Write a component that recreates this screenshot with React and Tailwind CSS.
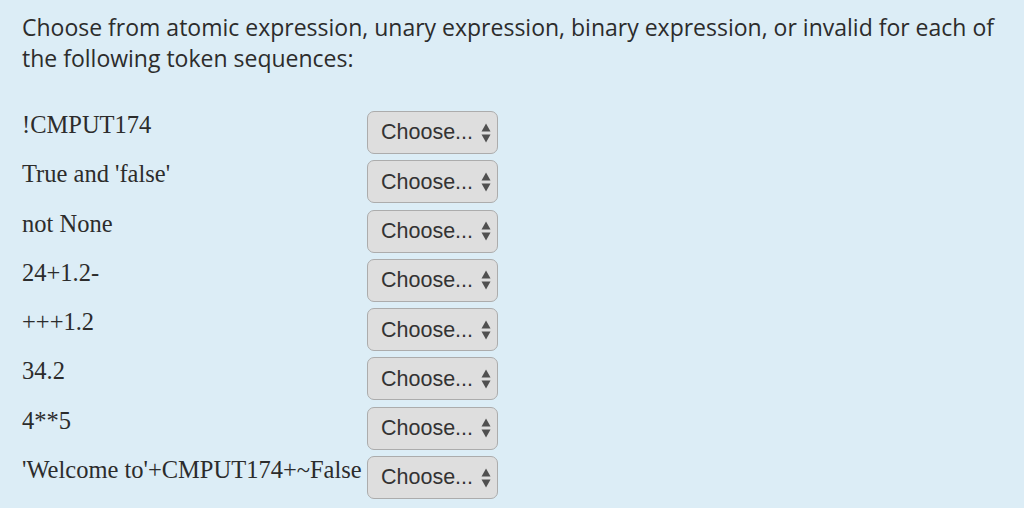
import React from "react";

const rows = [
  "!CMPUT174",
  "True and 'false'",
  "not None",
  "24+1.2-",
  "+++1.2",
  "34.2",
  "4**5",
  "'Welcome to'+CMPUT174+~False",
];

function Arrows() {
  return (
    <svg width="10" height="20" viewBox="0 0 10 20" className="ml-[8px]">
      <path d="M5 0.5 L9.5 8.5 L0.5 8.5 Z" fill="#505050" />
      <path d="M5 19.5 L9.5 11.5 L0.5 11.5 Z" fill="#505050" />
    </svg>
  );
}

export default function App() {
  return (
    <div className="w-[1024px] h-[508px] bg-[#dcedf6] overflow-hidden">
      <div className="pl-[22px] pt-[12px] pr-[20px]">
        <p className="font-['Open_Sans',sans-serif] text-[23px] leading-[31px] text-[#2c2c2c]">
          Choose from atomic expression, unary expression, binary expression, or invalid for each of the following token sequences:
        </p>
        <div className="mt-[37px] flex flex-col">
          {rows.map((r) => (
            <div key={r} className="flex h-[49.3px]">
              <div className="w-[345px] pt-[1px] font-['Liberation_Serif',serif] text-[24.5px] leading-[26px] text-[#2c2c2c] whitespace-nowrap">
                {r}
              </div>
              <div className="h-[43px] w-[131px] rounded-[7px] border border-[#acacac] bg-[#dedede] flex items-center pl-[13px] font-['Liberation_Sans',sans-serif] text-[21.5px] text-[#333]">
                Choose...
                <Arrows />
              </div>
            </div>
          ))}
        </div>
      </div>
    </div>
  );
}
